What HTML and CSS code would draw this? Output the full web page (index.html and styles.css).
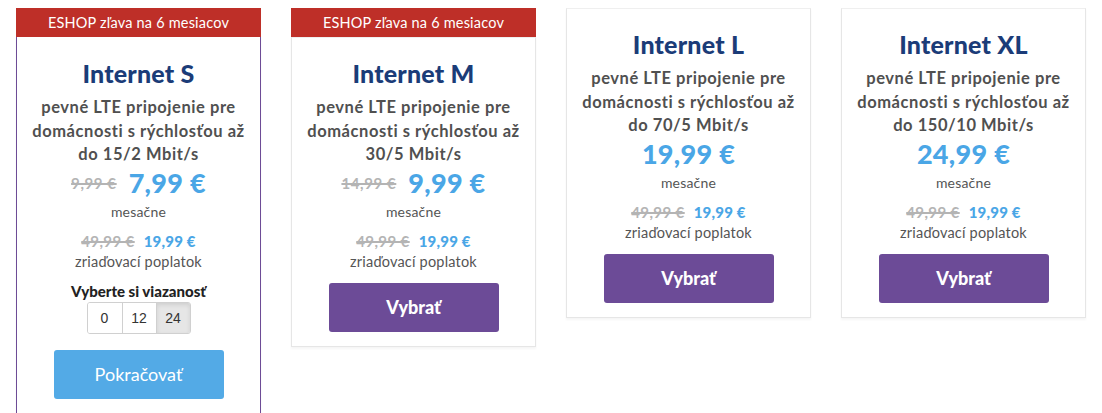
FILE: index.html
```html
<!DOCTYPE html>
<html lang="sk">
<head>
<meta charset="utf-8">
<title>Internet</title>
<link rel="stylesheet" href="styles.css">
</head>
<body>
<div class="plans">
  <div class="card">
    <div class="badge">ESHOP zľava na 6 mesiacov</div>
    <div class="body selected">
      <h2 class="title">Internet S</h2>
      <p class="desc">pevné LTE pripojenie pre domácnosti s rýchlosťou až do 15/2 Mbit/s</p>
      <div class="price"><s class="old">9,99 €</s><span class="now">7,99 €</span></div>
      <div class="note">mesačne</div>
      <div class="fee"><s class="old-fee">49,99 €</s><span class="now-fee">19,99 €</span></div>
      <div class="note fee-note">zriaďovací poplatok</div>
      <div class="commit-label">Vyberte si viazanosť</div>
      <div class="segment">
        <span class="seg">0</span><span class="seg">12</span><span class="seg active">24</span>
      </div>
      <button class="btn btn-continue">Pokračovať</button>
    </div>
  </div>
  <div class="card">
    <div class="badge">ESHOP zľava na 6 mesiacov</div>
    <div class="body">
      <h2 class="title">Internet M</h2>
      <p class="desc">pevné LTE pripojenie pre domácnosti s rýchlosťou až 30/5 Mbit/s</p>
      <div class="price"><s class="old">14,99 €</s><span class="now">9,99 €</span></div>
      <div class="note">mesačne</div>
      <div class="fee"><s class="old-fee">49,99 €</s><span class="now-fee">19,99 €</span></div>
      <div class="note fee-note">zriaďovací poplatok</div>
      <button class="btn btn-choose">Vybrať</button>
    </div>
  </div>
  <div class="card">
    <div class="body">
      <h2 class="title">Internet L</h2>
      <p class="desc">pevné LTE pripojenie pre domácnosti s rýchlosťou až do 70/5 Mbit/s</p>
      <div class="price"><span class="now">19,99 €</span></div>
      <div class="note">mesačne</div>
      <div class="fee"><s class="old-fee">49,99 €</s><span class="now-fee">19,99 €</span></div>
      <div class="note fee-note">zriaďovací poplatok</div>
      <button class="btn btn-choose">Vybrať</button>
    </div>
  </div>
  <div class="card">
    <div class="body">
      <h2 class="title">Internet XL</h2>
      <p class="desc">pevné LTE pripojenie pre domácnosti s rýchlosťou až do 150/10 Mbit/s</p>
      <div class="price"><span class="now">24,99 €</span></div>
      <div class="note">mesačne</div>
      <div class="fee"><s class="old-fee">49,99 €</s><span class="now-fee">19,99 €</span></div>
      <div class="note fee-note">zriaďovací poplatok</div>
      <button class="btn btn-choose">Vybrať</button>
    </div>
  </div>
</div>
</body>
</html>
```
FILE: styles.css
```css
* { box-sizing: border-box; }
html, body { margin: 0; background: #fff; }
body {
  padding: 8px 16px;
  font-family: Lato, "Noto Sans", sans-serif;
  color: #555;
}
.plans {
  display: flex;
  align-items: flex-start;
  gap: 30px;
}
.card {
  width: 245px;
  display: flex;
  flex-direction: column;
}
.badge {
  height: 29px;
  background: #be2f28;
  color: #fff;
  font-size: 14.5px;
  letter-spacing: 0.2px;
  line-height: 29px;
  text-align: center;
}
.body {
  border: 1px solid #e6e6e6;
  border-top: 1px solid #efefef;
  box-shadow: 0 2px 2px rgba(0,0,0,0.04);
  padding: 19px 20px 14px;
  display: flex;
  flex-direction: column;
  align-items: center;
  text-align: center;
}
.body.selected {
  border-color: #6d4c96;
  border-top: none;
  padding-top: 20px;
}
.title {
  margin: 0;
  font-size: 25px;
  line-height: 32px;
  font-weight: 900;
  letter-spacing: 0.2px;
  color: #1b3c78;
}
.desc {
  margin: 7px -12px 0;
  font-size: 16.5px;
  line-height: 23.5px;
  font-weight: 700;
  letter-spacing: 0.55px;
  color: #505050;
}
.price {
  display: flex;
  align-items: center;
  justify-content: center;
  gap: 12px;
  height: 32px;
}
.old {
  font-size: 15px;
  font-weight: 700;
  letter-spacing: 0.6px;
  color: #b4b4b4;
  text-decoration-thickness: 1.5px;
}
.now {
  font-size: 27px;
  font-weight: 900;
  letter-spacing: 0.3px;
  color: #4aa6e6;
}
.note {
  margin-top: 3px;
  font-size: 14px;
  letter-spacing: 0.2px;
  line-height: 20px;
  color: #555;
}
.fee {
  margin-top: 9px;
  display: flex;
  align-items: center;
  justify-content: center;
  gap: 9px;
  height: 20px;
}
.old-fee {
  font-size: 15px;
  font-weight: 700;
  letter-spacing: 0.4px;
  color: #b4b4b4;
  text-decoration-thickness: 1.5px;
}
.now-fee {
  font-size: 15px;
  font-weight: 900;
  letter-spacing: 0.2px;
  color: #4aa6e6;
}
.fee-note { margin-top: 1px; font-size: 14.5px; }
.commit-label {
  margin-top: 9px;
  font-size: 15px;
  line-height: 20px;
  font-weight: 900;
  color: #222;
}
.segment {
  margin-top: 1px;
  display: flex;
  border: 1px solid #d0d0d0;
  border-radius: 3px;
  overflow: hidden;
}
.seg {
  width: 34px;
  height: 30px;
  line-height: 30px;
  font-family: "Liberation Sans", Arial, sans-serif;
  font-size: 14px;
  color: #333;
  text-align: center;
  background: #fff;
}
.seg + .seg { border-left: 1px solid #d0d0d0; }
.seg.active {
  background: #e6e6e6;
  box-shadow: inset 0 2px 4px rgba(0,0,0,0.1);
}
.btn {
  width: 170px;
  height: 49px;
  border: none;
  border-radius: 3px;
  color: #fff;
  font-family: Lato, "Noto Sans", sans-serif;
  cursor: pointer;
}
.btn-continue {
  margin-top: 16px;
  background: #53aae6;
  font-size: 18px;
  font-weight: 400;
}
.btn-choose {
  margin-top: 11px;
  background: #6c4b97;
  font-size: 18px;
  font-weight: 900;
}
```
